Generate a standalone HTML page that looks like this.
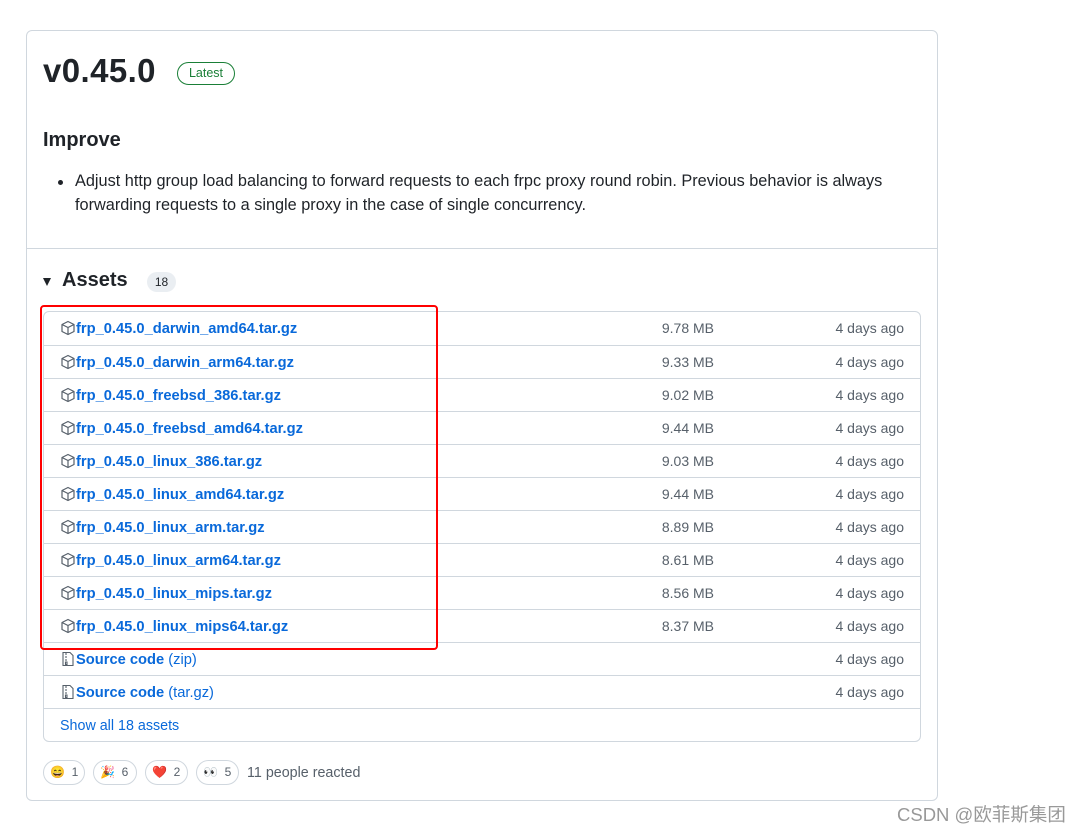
<!DOCTYPE html>
<html><head><meta charset="utf-8"><style>
*{margin:0;padding:0;box-sizing:border-box}
body{width:1082px;height:831px;background:#fff;font-family:"Liberation Sans",Arial,sans-serif;color:#1f2328;position:relative;overflow:hidden}
.a{position:absolute}
.card{left:26px;top:30px;width:912px;height:771px;border:1px solid #d0d7de;border-radius:6px}
.latest{left:177px;top:62px;width:58px;height:23px;border:1px solid #1a7f37;border-radius:12px;color:#1a7f37;font-size:12.5px;text-align:center;line-height:21px}
.h2{left:43px;top:129px;font-size:20px;font-weight:600}
.p{left:75px;top:169px;font-size:16.3px;line-height:24px;width:840px}
.dot{left:58px;top:180px;width:5px;height:5px;border-radius:50%;background:#1f2328}
.div{left:27px;top:248px;width:910px;height:1px;background:#d0d7de}
.tri{left:43px;top:278px;width:0;height:0;border-left:4.5px solid transparent;border-right:4.5px solid transparent;border-top:8px solid #1f2328}
.assets{left:62px;top:269px;font-size:20px;font-weight:600}
.cnt{left:147px;top:272px;width:29px;height:20px;border-radius:10px;background:#eaeef2;font-size:12px;text-align:center;line-height:20px}
.box{left:43px;top:311px;width:878px;height:431px;border:1px solid #d0d7de;border-radius:6px}
.row{position:absolute;left:44px;width:876px;height:33px;border-top:1px solid #d0d7de;font-size:14px}
.nm{position:absolute;left:32px;top:9px;color:#0969da;font-weight:600;font-size:14.7px}
.nm span{font-weight:400}
.ic{position:absolute;left:16px;top:8px}
.sz{position:absolute;right:206px;top:8px;color:#57606a}
.dt{position:absolute;right:16px;top:8px;color:#57606a}
.red{left:40px;top:305px;width:398px;height:345px;border:2px solid #f00;border-radius:4px}
.rx{top:760px;height:25px;border:1px solid #d0d7de;border-radius:13px;font-size:12px;color:#57606a;line-height:23px;padding-left:6px}
</style></head><body>
<div class="a card"></div>
<div class="a" style="left:43px;top:52px;font-size:33px;font-weight:700;letter-spacing:0.4px">v0.45.0</div>
<div class="a latest">Latest</div>
<div class="a h2">Improve</div>
<div class="a dot"></div>
<div class="a p">Adjust http group load balancing to forward requests to each frpc proxy round robin. Previous behavior is always forwarding requests to a single proxy in the case of single concurrency.</div>
<div class="a div"></div>
<div class="a tri"></div>
<div class="a assets">Assets</div>
<div class="a cnt">18</div>
<div class="a box"></div>
<div class="row" style="top:312px;border-top:none"><svg class="ic" width="16" height="16" viewBox="0 0 16 16"><path d="M8 1.5l6 3v7l-6 3-6-3v-7zM2 4.5l6 3 6-3M8 7.5v7" fill="none" stroke="#57606a" stroke-width="1.2" stroke-linejoin="round"/></svg><div class="nm">frp_0.45.0_darwin_amd64.tar.gz</div><div class="sz">9.78 MB</div><div class="dt">4 days ago</div></div>
<div class="row" style="top:345px"><svg class="ic" width="16" height="16" viewBox="0 0 16 16"><path d="M8 1.5l6 3v7l-6 3-6-3v-7zM2 4.5l6 3 6-3M8 7.5v7" fill="none" stroke="#57606a" stroke-width="1.2" stroke-linejoin="round"/></svg><div class="nm">frp_0.45.0_darwin_arm64.tar.gz</div><div class="sz">9.33 MB</div><div class="dt">4 days ago</div></div>
<div class="row" style="top:378px"><svg class="ic" width="16" height="16" viewBox="0 0 16 16"><path d="M8 1.5l6 3v7l-6 3-6-3v-7zM2 4.5l6 3 6-3M8 7.5v7" fill="none" stroke="#57606a" stroke-width="1.2" stroke-linejoin="round"/></svg><div class="nm">frp_0.45.0_freebsd_386.tar.gz</div><div class="sz">9.02 MB</div><div class="dt">4 days ago</div></div>
<div class="row" style="top:411px"><svg class="ic" width="16" height="16" viewBox="0 0 16 16"><path d="M8 1.5l6 3v7l-6 3-6-3v-7zM2 4.5l6 3 6-3M8 7.5v7" fill="none" stroke="#57606a" stroke-width="1.2" stroke-linejoin="round"/></svg><div class="nm">frp_0.45.0_freebsd_amd64.tar.gz</div><div class="sz">9.44 MB</div><div class="dt">4 days ago</div></div>
<div class="row" style="top:444px"><svg class="ic" width="16" height="16" viewBox="0 0 16 16"><path d="M8 1.5l6 3v7l-6 3-6-3v-7zM2 4.5l6 3 6-3M8 7.5v7" fill="none" stroke="#57606a" stroke-width="1.2" stroke-linejoin="round"/></svg><div class="nm">frp_0.45.0_linux_386.tar.gz</div><div class="sz">9.03 MB</div><div class="dt">4 days ago</div></div>
<div class="row" style="top:477px"><svg class="ic" width="16" height="16" viewBox="0 0 16 16"><path d="M8 1.5l6 3v7l-6 3-6-3v-7zM2 4.5l6 3 6-3M8 7.5v7" fill="none" stroke="#57606a" stroke-width="1.2" stroke-linejoin="round"/></svg><div class="nm">frp_0.45.0_linux_amd64.tar.gz</div><div class="sz">9.44 MB</div><div class="dt">4 days ago</div></div>
<div class="row" style="top:510px"><svg class="ic" width="16" height="16" viewBox="0 0 16 16"><path d="M8 1.5l6 3v7l-6 3-6-3v-7zM2 4.5l6 3 6-3M8 7.5v7" fill="none" stroke="#57606a" stroke-width="1.2" stroke-linejoin="round"/></svg><div class="nm">frp_0.45.0_linux_arm.tar.gz</div><div class="sz">8.89 MB</div><div class="dt">4 days ago</div></div>
<div class="row" style="top:543px"><svg class="ic" width="16" height="16" viewBox="0 0 16 16"><path d="M8 1.5l6 3v7l-6 3-6-3v-7zM2 4.5l6 3 6-3M8 7.5v7" fill="none" stroke="#57606a" stroke-width="1.2" stroke-linejoin="round"/></svg><div class="nm">frp_0.45.0_linux_arm64.tar.gz</div><div class="sz">8.61 MB</div><div class="dt">4 days ago</div></div>
<div class="row" style="top:576px"><svg class="ic" width="16" height="16" viewBox="0 0 16 16"><path d="M8 1.5l6 3v7l-6 3-6-3v-7zM2 4.5l6 3 6-3M8 7.5v7" fill="none" stroke="#57606a" stroke-width="1.2" stroke-linejoin="round"/></svg><div class="nm">frp_0.45.0_linux_mips.tar.gz</div><div class="sz">8.56 MB</div><div class="dt">4 days ago</div></div>
<div class="row" style="top:609px"><svg class="ic" width="16" height="16" viewBox="0 0 16 16"><path d="M8 1.5l6 3v7l-6 3-6-3v-7zM2 4.5l6 3 6-3M8 7.5v7" fill="none" stroke="#57606a" stroke-width="1.2" stroke-linejoin="round"/></svg><div class="nm">frp_0.45.0_linux_mips64.tar.gz</div><div class="sz">8.37 MB</div><div class="dt">4 days ago</div></div>
<div class="row" style="top:642px"><svg class="ic" width="16" height="16" viewBox="0 0 16 16"><path d="M3 1.5h7l3 3v10H3zM6 2v2M6 5v2M6 8v2M5.5 11h1.5v2.5H5.5z" fill="none" stroke="#57606a" stroke-width="1.1"/></svg><div class="nm">Source code <span>(zip)</span></div><div class="dt">4 days ago</div></div>
<div class="row" style="top:675px"><svg class="ic" width="16" height="16" viewBox="0 0 16 16"><path d="M3 1.5h7l3 3v10H3zM6 2v2M6 5v2M6 8v2M5.5 11h1.5v2.5H5.5z" fill="none" stroke="#57606a" stroke-width="1.1"/></svg><div class="nm">Source code <span>(tar.gz)</span></div><div class="dt">4 days ago</div></div>
<div class="row" style="top:708px"><div class="nm" style="left:16px;font-weight:400;font-size:14.3px">Show all 18 assets</div></div>
<div class="a red"></div>
<div class="a rx" style="left:43px;width:42px">😄 &nbsp;1</div>
<div class="a rx" style="left:93px;width:44px">🎉 &nbsp;6</div>
<div class="a rx" style="left:145px;width:43px">❤️ &nbsp;2</div>
<div class="a rx" style="left:196px;width:43px">👀 &nbsp;5</div>
<div class="a" style="left:247px;top:765px;font-size:14.3px;color:#57606a">11 people reacted</div>
<div class="a" style="left:897px;top:801px;font-size:18.5px;color:#999;font-family:'Liberation Sans','Noto Sans CJK SC',sans-serif">CSDN @欧菲斯集团</div>
</body></html>
